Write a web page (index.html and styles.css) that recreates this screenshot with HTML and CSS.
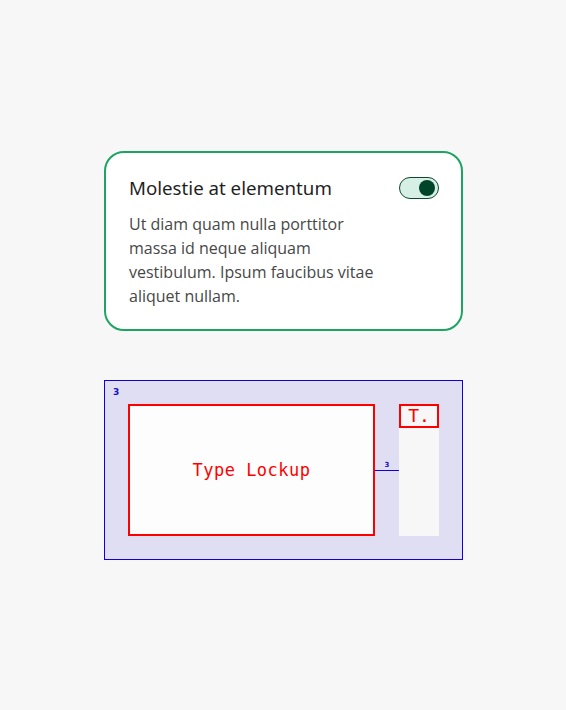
FILE: index.html
```html
<!DOCTYPE html>
<html>
<head>
<meta charset="utf-8">
<link rel="stylesheet" href="styles.css">
</head>
<body>
<main class="page">
  <section class="card">
    <div class="card-head">
      <h2 class="card-title">Molestie at elementum</h2>
      <span class="toggle" role="switch" aria-checked="true"><span class="knob"></span></span>
    </div>
    <p class="card-text">Ut diam quam nulla porttitor massa id neque aliquam vestibulum. Ipsum faucibus vitae aliquet nullam.</p>
  </section>

  <section class="spec">
    <span class="spec-pad">3</span>
    <div class="lockup"><span class="lockup-label">Type Lockup</span></div>
    <div class="spacer">
      <span class="spacer-label">3</span>
      <span class="spacer-line"></span>
    </div>
    <div class="column">
      <div class="mini">T.</div>
    </div>
  </section>
</main>
</body>
</html>
```
FILE: styles.css
```css
* { box-sizing: border-box; }
html, body { margin: 0; padding: 0; }
body {
  background: #f7f7f7;
  width: 566px;
  height: 710px;
  font-family: "Open Sans", "Noto Sans", sans-serif;
}
.page {
  display: flex;
  flex-direction: column;
  align-items: flex-start;
  padding: 151px 0 0 104px;
  gap: 49px;
}
.card {
  width: 359px;
  height: 180px;
  border: 2px solid #1da462;
  border-radius: 20px;
  background: #ffffff;
  padding: 21px 22px 21px 23px;
}
.card-head {
  display: flex;
  justify-content: space-between;
  align-items: center;
  height: 28px;
}
.card-title {
  margin: 0;
  font-family: "Noto Sans", sans-serif;
  font-weight: 400;
  font-size: 18.7px;
  line-height: 28px;
  color: #1f1f1f;
}
.toggle {
  width: 40px;
  height: 22px;
  border: 1px solid #0c4a30;
  border-radius: 11px;
  background: #d7f0e5;
  display: flex;
  align-items: center;
  justify-content: flex-end;
  padding-right: 3px;
}
.knob {
  width: 16px;
  height: 16px;
  border-radius: 50%;
  background: #00452a;
}
.card-text {
  margin: 10px 0 0;
  max-width: 252px;
  font-size: 16px;
  line-height: 24px;
  color: #474747;
}
.spec {
  position: relative;
  width: 359px;
  height: 180px;
  border: 1px solid #1400d6;
  background: #e0def3;
  padding: 23px 23px 23px 23px;
  display: flex;
  align-items: stretch;
}
.spec-pad {
  position: absolute;
  left: 8px;
  top: 6px;
  font-family: "DejaVu Sans", sans-serif;
  font-weight: 700;
  font-size: 9px;
  line-height: 10px;
  color: #1a10c8;
}
.lockup {
  flex: 1;
  border: 2px solid #ff0000;
  background: #fdfdfd;
  display: flex;
  align-items: center;
  justify-content: center;
}
.lockup-label {
  font-family: "DejaVu Sans Mono", monospace;
  font-size: 17px;
  color: #ff0000;
  letter-spacing: 0.5px;
}
.spacer {
  width: 24px;
  display: flex;
  flex-direction: column;
  justify-content: center;
  align-items: center;
}
.spacer-label {
  font-family: "DejaVu Sans", sans-serif;
  font-weight: 700;
  font-size: 7px;
  line-height: 9px;
  color: #1a10c8;
  margin-top: -9px;
}
.spacer-line {
  width: 100%;
  height: 1px;
  background: #1400d6;
}
.column {
  width: 40px;
  background: #f7f7f7;
}
.mini {
  height: 24px;
  border: 2px solid #ff0000;
  display: flex;
  align-items: center;
  justify-content: center;
  font-family: "DejaVu Sans Mono", monospace;
  font-size: 18px;
  line-height: 20px;
  color: #ff0000;
}
```
